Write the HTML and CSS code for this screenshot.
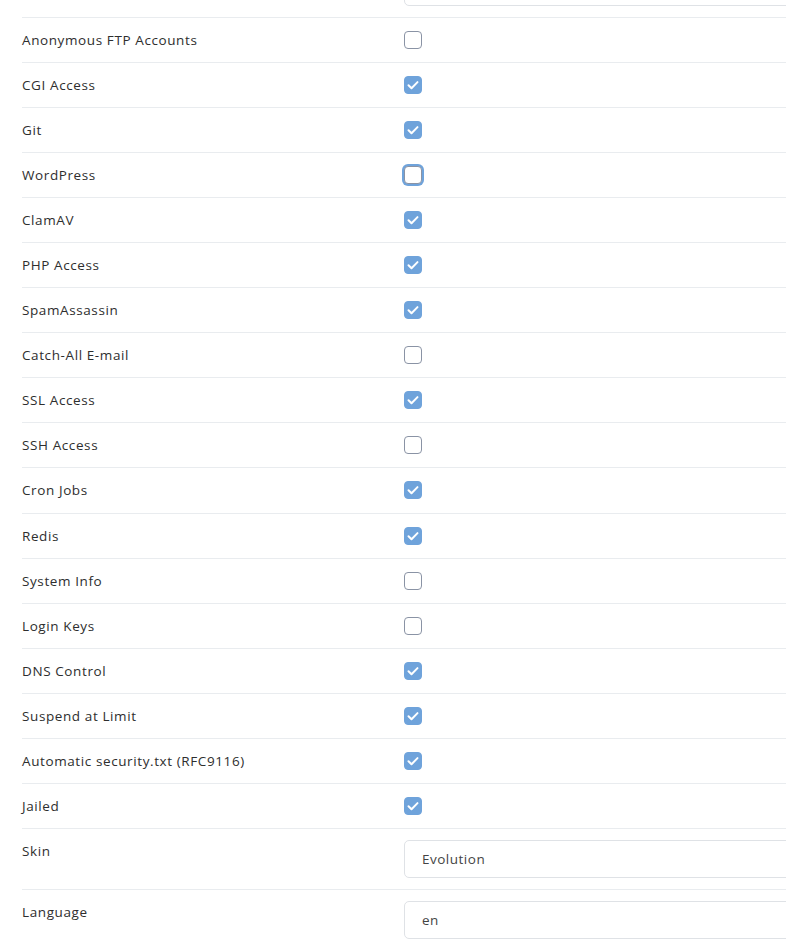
FILE: index.html
```html
<!DOCTYPE html>
<html lang="en">
<head>
  <meta charset="UTF-8">
  <meta name="viewport" content="width=device-width, initial-scale=1.0">
  <title>Package Settings</title>
  <link rel="stylesheet" href="styles.css">
</head>
<body>
  <form class="settings">
    <div class="row">
      <label for="quota"></label>
      <input class="field" type="text" id="quota" value="">
    </div>
    <div class="row">
      <label for="ftp">Anonymous FTP Accounts</label>
      <div><input type="checkbox" id="ftp" class="check"></div>
    </div>
    <div class="row">
      <label for="cgi">CGI Access</label>
      <div><input type="checkbox" id="cgi" class="check" checked></div>
    </div>
    <div class="row">
      <label for="git">Git</label>
      <div><input type="checkbox" id="git" class="check" checked></div>
    </div>
    <div class="row">
      <label for="wp">WordPress</label>
      <div><input type="checkbox" id="wp" class="check focus"></div>
    </div>
    <div class="row">
      <label for="clamav">ClamAV</label>
      <div><input type="checkbox" id="clamav" class="check" checked></div>
    </div>
    <div class="row">
      <label for="php">PHP Access</label>
      <div><input type="checkbox" id="php" class="check" checked></div>
    </div>
    <div class="row">
      <label for="spam">SpamAssassin</label>
      <div><input type="checkbox" id="spam" class="check" checked></div>
    </div>
    <div class="row">
      <label for="catchall">Catch-All E-mail</label>
      <div><input type="checkbox" id="catchall" class="check"></div>
    </div>
    <div class="row">
      <label for="ssl">SSL Access</label>
      <div><input type="checkbox" id="ssl" class="check" checked></div>
    </div>
    <div class="row">
      <label for="ssh">SSH Access</label>
      <div><input type="checkbox" id="ssh" class="check"></div>
    </div>
    <div class="row">
      <label for="cron">Cron Jobs</label>
      <div><input type="checkbox" id="cron" class="check" checked></div>
    </div>
    <div class="row">
      <label for="redis">Redis</label>
      <div><input type="checkbox" id="redis" class="check" checked></div>
    </div>
    <div class="row">
      <label for="sysinfo">System Info</label>
      <div><input type="checkbox" id="sysinfo" class="check"></div>
    </div>
    <div class="row">
      <label for="loginkeys">Login Keys</label>
      <div><input type="checkbox" id="loginkeys" class="check"></div>
    </div>
    <div class="row">
      <label for="dns">DNS Control</label>
      <div><input type="checkbox" id="dns" class="check" checked></div>
    </div>
    <div class="row">
      <label for="suspend">Suspend at Limit</label>
      <div><input type="checkbox" id="suspend" class="check" checked></div>
    </div>
    <div class="row">
      <label for="securitytxt">Automatic security.txt (RFC9116)</label>
      <div><input type="checkbox" id="securitytxt" class="check" checked></div>
    </div>
    <div class="row">
      <label for="jailed">Jailed</label>
      <div><input type="checkbox" id="jailed" class="check" checked></div>
    </div>
    <div class="row">
      <label for="skin">Skin</label>
      <input class="field" type="text" id="skin" value="Evolution">
    </div>
    <div class="row">
      <label for="language">Language</label>
      <input class="field" type="text" id="language" value="en">
    </div>
  </form>
</body>
</html>
```

FILE: styles.css
```css
html {
  overflow: hidden;
}

body {
  margin: 0;
  background: #fff;
  font-family: "Open Sans", Arial, sans-serif;
  font-size: 13.5px;
  color: #2e2e2e;
}

.settings {
  width: 1000px;
  margin: -43px 0 0 22px;
}

.row {
  display: grid;
  grid-template-columns: 382px 1fr;
  align-items: start;
  padding: 11px 0;
  border-bottom: 1px solid #e9ecef;
}

.row label {
  line-height: 22.047px;
  letter-spacing: 0.6px;
}

.check {
  appearance: none;
  -webkit-appearance: none;
  display: block;
  width: 18px;
  height: 18px;
  margin: 2px 0 0;
  border: 1px solid #8a93a5;
  border-radius: 4px;
  background: #fff;
  cursor: pointer;
}

.check:checked {
  border-color: #6fa3db;
  background: #6fa3db url("data:image/svg+xml,%3Csvg xmlns='http://www.w3.org/2000/svg' viewBox='0 0 18 18'%3E%3Cpath d='M4.5 9.3l3 3 6-6.2' fill='none' stroke='%23fff' stroke-width='2' stroke-linecap='round' stroke-linejoin='round'/%3E%3C/svg%3E") no-repeat center / 18px 18px;
}

.check.focus {
  box-shadow: 0 0 0 2px #6fa3db;
}

.field {
  box-sizing: border-box;
  height: 38px;
  width: 100%;
  padding: 0 17px;
  border: 1px solid #dfe2e6;
  border-radius: 5px;
  font-family: inherit;
  font-size: 13.5px;
  letter-spacing: 0.5px;
  color: #444;
  background: #fff;
}
```
